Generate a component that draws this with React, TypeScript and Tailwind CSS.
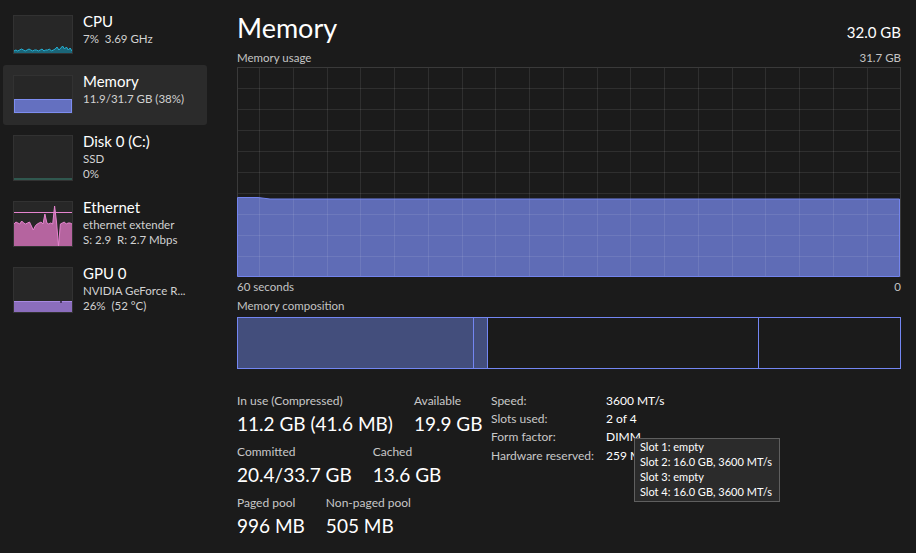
import React from "react";

const cpuY = [35, 34, 35, 34, 33, 34, 35, 34, 33, 34, 35, 34, 34, 35, 34, 33, 35, 34, 34, 33, 35, 34, 33, 31, 34, 32, 30, 33, 31, 34, 32, 35];
const ethY = [22, 20, 21, 22, 19, 21, 22, 21, 20, 24, 28, 24, 22, 21, 20, 22, 12, 21, 22, 21, 22, 4, 20, 44, 22, 21, 20, 22, 21, 21, 22];

function toPoints(ys: number[], w: number) {
  const step = w / (ys.length - 1);
  return ys.map((y, i) => `${(i * step).toFixed(1)},${y}`).join(" ");
}

function CpuGraph() {
  const pts = toPoints(cpuY, 58);
  return (
    <svg width="58" height="37" className="block">
      <polygon points={`0,37 ${pts} 58,37`} fill="#1b6679" />
      <polyline points={pts} fill="none" stroke="#25b2d6" strokeWidth="1" />
    </svg>
  );
}

function MemoryGraph() {
  return (
    <svg width="58" height="37" className="block">
      <rect x="0.5" y="23.5" width="57" height="13" fill="#6470c0" stroke="#7d8df0" />
    </svg>
  );
}

function DiskGraph() {
  return (
    <svg width="58" height="44" className="block">
      <line x1="0" y1="43" x2="58" y2="43" stroke="#3b8a78" strokeWidth="1.2" />
    </svg>
  );
}

function EthernetGraph() {
  const pts = toPoints(ethY, 58);
  return (
    <svg width="58" height="44" className="block">
      <polygon points={`0,44 ${pts} 58,44`} fill="#b5649f" />
      <polyline points={pts} fill="none" stroke="#e584cf" strokeWidth="1" />
      <line x1="0" y1="10.5" x2="58" y2="10.5" stroke="#e584cf" strokeWidth="1.2" />
    </svg>
  );
}

function GpuGraph() {
  return (
    <svg width="58" height="43" className="block">
      <rect x="0" y="32" width="58" height="11" fill="#8b6dbd" />
      <line x1="0" y1="32.5" x2="58" y2="32.5" stroke="#a889e2" />
      <rect x="46" y="32" width="2" height="2" fill="#4a3a66" />
    </svg>
  );
}

const items = [
  { name: "CPU", lines: ["7%  3.69 GHz"], tall: false, graph: <CpuGraph /> },
  { name: "Memory", lines: ["11.9/31.7 GB (38%)"], tall: false, graph: <MemoryGraph />, active: true },
  { name: "Disk 0 (C:)", lines: ["SSD", "0%"], tall: true, graph: <DiskGraph /> },
  { name: "Ethernet", lines: ["ethernet extender", "S: 2.9  R: 2.7 Mbps"], tall: true, graph: <EthernetGraph /> },
  { name: "GPU 0", lines: ["NVIDIA GeForce R...", "26%  (52 °C)"], tall: true, graph: <GpuGraph /> },
];

function Sidebar() {
  return (
    <div className="w-[237px] shrink-0 pl-[3px] pt-[5px]">
      {items.map((it) => (
        <div
          key={it.name}
          className={`w-[204px] flex gap-[10px] pl-[10px] pt-[10px] rounded-[3px] ${it.tall ? "h-[66px]" : "h-[60px]"} ${it.active ? "bg-[#2b2b2b]" : ""}`}
        >
          <div className={`w-[60px] shrink-0 bg-[#272727] border border-[#323232] flex items-end ${it.tall ? "h-[46px]" : "h-[39px]"}`}>
            {it.graph}
          </div>
          <div className="-mt-[3px]">
            <div className="text-[15px] leading-[19px] text-white">{it.name}</div>
            {it.lines.map((l) => (
              <div key={l} className="text-[11.5px] leading-[15px] text-[#d2d2d2] whitespace-pre">
                {l}
              </div>
            ))}
          </div>
        </div>
      ))}
    </div>
  );
}

function UsageChart() {
  const W = 664;
  const H = 210;
  const vlines: number[] = [];
  for (let k = 0; 22 + 33.75 * k < W - 2; k++) vlines.push(Math.round(22 + 33.75 * k) + 0.5);
  const hlines = [1, 2, 3, 4, 5, 6, 7, 8, 9].map((k) => 21 * k + 0.5);
  return (
    <svg width={W} height={H} className="block">
      <polygon points={`0.5,${H - 0.5} 0.5,130.5 21,130.5 33,132 662.5,132 662.5,${H - 0.5}`} fill="#5f6cb6" />
      {vlines.map((x) => (
        <line key={"v" + x} x1={x} y1="0" x2={x} y2={H} stroke="rgba(255,255,255,0.09)" />
      ))}
      {hlines.map((y) => (
        <line key={"h" + y} x1="0" y1={y} x2={W} y2={y} stroke="rgba(255,255,255,0.09)" />
      ))}
      <rect x="0.5" y="0.5" width={W - 1} height={H - 1} fill="none" stroke="#3a3a3a" />
      <polyline
        points={`0.5,${H - 0.5} 0.5,130.5 21,130.5 33,132 662.5,132 662.5,${H - 0.5} 0.5,${H - 0.5}`}
        fill="none"
        stroke="#7384ee"
      />
    </svg>
  );
}

function Stat({ label, value }: { label: string; value: string }) {
  return (
    <div>
      <div className="text-[12px] leading-[16px] text-[#c8c8c8] whitespace-nowrap">{label}</div>
      <div className="text-[19px] leading-[26px] mt-[2px] text-white whitespace-nowrap">{value}</div>
    </div>
  );
}

const specs = [
  ["Speed:", "3600 MT/s"],
  ["Slots used:", "2 of 4"],
  ["Form factor:", "DIMM"],
  ["Hardware reserved:", "259 MB"],
];

export default function App() {
  return (
    <div className="w-[916px] h-[553px] bg-[#1b1b1b] text-white flex overflow-hidden font-[Lato,'Noto_Sans',sans-serif]">
      <Sidebar />
      <div className="w-[664px] pt-[12px]">
        <div className="flex items-baseline justify-between">
          <h1 className="text-[27px] leading-[32px]">Memory</h1>
          <span className="text-[15px] leading-[20px]">32.0 GB</span>
        </div>
        <div className="mt-[7px] flex justify-between text-[11.5px] leading-[14px] text-[#c4c4c4]">
          <span>Memory usage</span>
          <span>31.7 GB</span>
        </div>
        <div className="mt-[2px]">
          <UsageChart />
        </div>
        <div className="mt-[3px] flex justify-between text-[11.5px] leading-[14px] text-[#c4c4c4]">
          <span>60 seconds</span>
          <span>0</span>
        </div>
        <div className="mt-[5px] text-[11.5px] leading-[14px] text-[#c4c4c4]">Memory composition</div>
        <div className="mt-[4px] h-[52px] flex border border-[#7386f2]">
          <div className="w-[236px] bg-[#434e7c] border-r border-[#7386f2]" />
          <div className="w-[14px] bg-[#434e7c] border-r border-[#7386f2]" />
          <div className="w-[271px] border-r border-[#7386f2]" />
          <div className="flex-1" />
        </div>
        <div className="relative mt-[24px] flex">
          <div className="w-[254px] flex flex-col gap-[7px]">
            <div className="flex gap-[21px]">
              <Stat label="In use (Compressed)" value="11.2 GB (41.6 MB)" />
              <Stat label="Available" value="19.9 GB" />
            </div>
            <div className="flex gap-[21px]">
              <Stat label="Committed" value="20.4/33.7 GB" />
              <Stat label="Cached" value="13.6 GB" />
            </div>
            <div className="flex gap-[21px]">
              <Stat label="Paged pool" value="996 MB" />
              <Stat label="Non-paged pool" value="505 MB" />
            </div>
          </div>
          <div className="-mt-[1px] grid grid-cols-[115px_auto] text-[12px] leading-[18.2px] content-start">
            {specs.map(([k, v]) => (
              <React.Fragment key={k}>
                <span className="text-[#c8c8c8]">{k}</span>
                <span className="text-white">{v}</span>
              </React.Fragment>
            ))}
          </div>
          <div className="absolute left-[397px] top-[45px] w-[146px] h-[64px] bg-[#2b2b2b] border border-[#5f5f5f] pl-[5px] text-[11px] leading-[15px] text-white">
            <div>Slot 1: empty</div>
            <div>Slot 2: 16.0 GB, 3600 MT/s</div>
            <div>Slot 3: empty</div>
            <div>Slot 4: 16.0 GB, 3600 MT/s</div>
          </div>
        </div>
      </div>
    </div>
  );
}
